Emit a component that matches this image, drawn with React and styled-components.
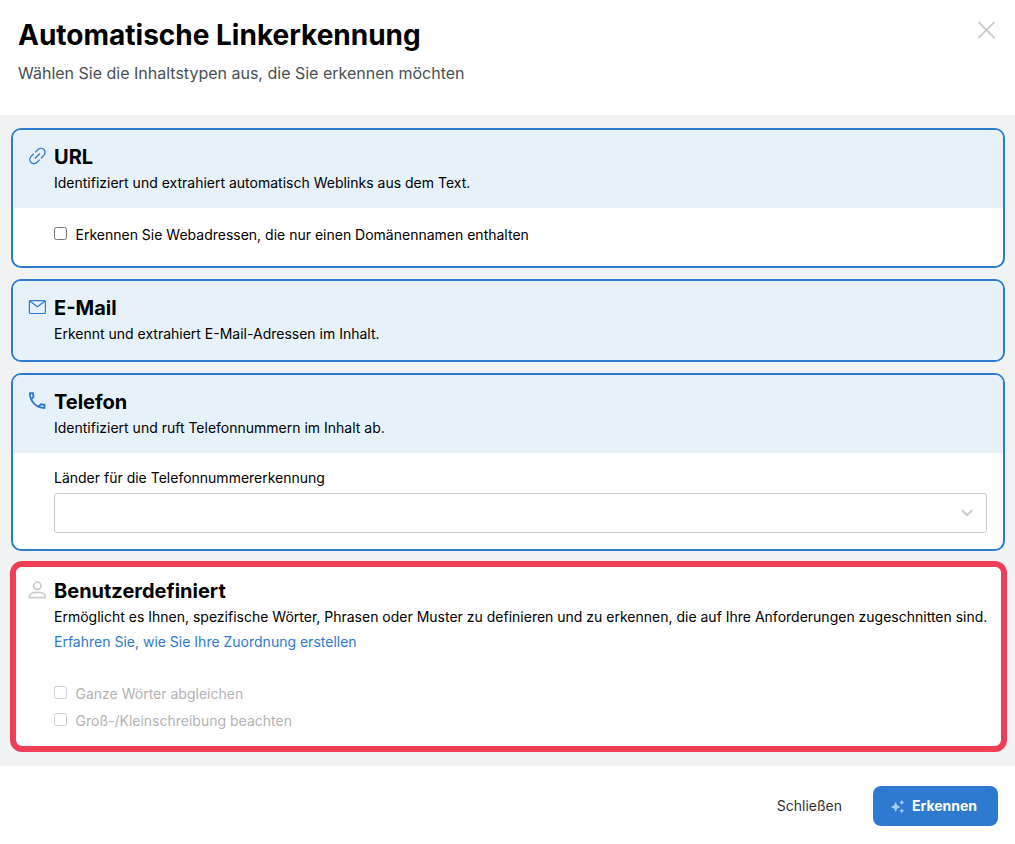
import React from 'react';
import styled, { createGlobalStyle, css } from 'styled-components';

const BLUE = '#2e7ad1';

const GlobalStyle = createGlobalStyle`
  * { box-sizing: border-box; }
  html, body { margin: 0; background: #fff; }
  body { font-family: Inter, "Liberation Sans", sans-serif; font-size: 14px; color: #000; overflow: hidden; }
`;

const Dialog = styled.main`
  display: flex;
  flex-direction: column;
  width: 1015px;
  height: 844px;
  background: #fff;
`;

const Header = styled.header`
  display: flex;
  justify-content: space-between;
  height: 115px;
  padding: 17px 20px 0 18px;
`;

const Title = styled.h1`
  margin: 0;
  font-size: 28px;
  line-height: 36px;
  font-weight: 700;
`;

const Subtitle = styled.p`
  margin: 10px 0 0;
  font-size: 16px;
  line-height: 20px;
  color: #495054;
`;

const CloseButton = styled.button`
  width: 18px;
  height: 18px;
  margin-top: 4px;
  padding: 0;
  border: 0;
  background: none;
  color: #ccc;
  svg { display: block; }
`;

const Body = styled.section`
  display: flex;
  flex-direction: column;
  height: 651px;
  padding: 13px 10px 0 11px;
  background: #f0f2f4;
`;

const Card = styled.article`
  flex: none;
  width: 994px;
  height: ${(p) => p.$height}px;
  margin-bottom: 11px;
  border: 2px solid ${BLUE};
  border-radius: 10px;
  background: #fff;
  overflow: hidden;
  ${(p) =>
    p.$highlighted &&
    css`
      width: 997px;
      margin: -1px 0 0 -1px;
      border: 6px solid #f03e56;
      border-radius: 12px;
    `}
`;

const CardHead = styled.div`
  display: flex;
  height: ${(p) => (p.$plain ? 'auto' : '78px')};
  padding: ${(p) => (p.$plain ? '11px 0 0 12px' : '14px 0 0 15px')};
  background: ${(p) => (p.$plain ? '#fff' : '#e6f1fa')};
  ${(p) => p.$fill && 'height: 100%;'}
`;

const IconBox = styled.span`
  flex: none;
  width: 26px;
  padding-top: 3px;
  color: ${(p) => (p.$muted ? '#ccc' : BLUE)};
  svg { display: block; }
`;

const CardTitle = styled.h2`
  margin: 0;
  font-size: 20px;
  line-height: 26px;
  font-weight: 650;
`;

const Text = styled.p`
  margin: 3px 0 0;
  line-height: 20px;
  white-space: nowrap;
`;

const LearnLink = styled.a`
  display: block;
  margin-top: 5px;
  line-height: 20px;
  color: ${BLUE};
`;

const CardBody = styled.div`
  padding: ${(p) => p.$top}px 16px 0 41px;
  ${(p) => p.$plain && 'padding-left: 38px;'}
`;

const CheckRow = styled.label`
  display: flex;
  align-items: center;
  height: 27px;
  color: ${(p) => (p.$disabled ? '#b3b3b3' : '#000')};
`;

const Checkbox = styled.input`
  appearance: none;
  flex: none;
  width: 13px;
  height: 13px;
  margin: -3px 8.5px 0 0;
  border: 1px solid #767676;
  border-radius: 2.5px;
  background: #fff;
  &:disabled { border-color: #cfcfcf; }
`;

const FieldLabel = styled.div`
  line-height: 20px;
`;

const Select = styled.div`
  display: flex;
  align-items: center;
  justify-content: flex-end;
  width: 933px;
  height: 40px;
  margin-top: 5px;
  padding-right: 13px;
  border: 1px solid #ccc;
  border-radius: 3px;
`;

const Footer = styled.footer`
  display: flex;
  justify-content: flex-end;
  align-items: center;
  height: 78px;
  padding: 2px 17px 0 0;
`;

const TextButton = styled.button`
  margin-right: 31px;
  padding: 0 0 2px;
  border: 0;
  background: none;
  font: inherit;
  color: #333;
`;

const PrimaryButton = styled.button`
  display: flex;
  align-items: center;
  width: 125px;
  height: 40px;
  padding: 0 0 0 17px;
  gap: 7px;
  border: 0;
  border-radius: 8px;
  background: ${BLUE};
  color: #fff;
  font: inherit;
  font-weight: 700;
`;

const ButtonLabel = styled.span`
  padding-bottom: 2px;
`;

const LinkIcon = () => (
  <svg width="18" height="18" viewBox="0 0 18 18" fill="none" stroke="currentColor" strokeWidth="1.3">
    <g transform="translate(9.4 9) rotate(-45)">
      <path d="M-1-4.1H-5A4.1 4.1 0 0 0-5 4.1H-1M1-4.1H5A4.1 4.1 0 0 1 5 4.1H1M-3.6 0H3.6" />
    </g>
  </svg>
);

const MailIcon = () => (
  <svg width="18" height="18" viewBox="0 0 18 18" fill="none" stroke="currentColor" strokeWidth="1.2">
    <rect x="1.4" y="2.6" width="16" height="12.9" rx="1" />
    <path d="M1.7 3l7.7 5.8L17.1 3" />
  </svg>
);

const PhoneIcon = () => (
  <svg width="18" height="18" viewBox="2 2.6 19.6 19.6" fill="currentColor">
    <path d="M6.54 5c.06.89.21 1.76.45 2.59l-1.2 1.2c-.41-1.2-.67-2.47-.76-3.79h1.51m9.86 12.02c.85.24 1.72.39 2.6.45v1.49c-1.32-.09-2.59-.35-3.8-.75l1.2-1.19M7.5 3H4c-.55 0-1 .45-1 1 0 9.39 7.61 17 17 17 .55 0 1-.45 1-1v-3.49c0-.55-.45-1-1-1-1.24 0-2.45-.2-3.57-.57-.1-.04-.21-.05-.31-.05-.26 0-.51.1-.71.29l-2.2 2.2c-2.83-1.45-5.15-3.76-6.59-6.59l2.2-2.2c.28-.28.36-.67.25-1.02C8.7 6.45 8.5 5.25 8.5 4c0-.55-.45-1-1-1z" />
  </svg>
);

const PersonIcon = () => (
  <svg width="19" height="18" viewBox="0 0 19 18" fill="none" stroke="currentColor" strokeWidth="1.7">
    <circle cx="9.4" cy="4.8" r="3.6" />
    <path d="M1.4 16.7V15c0-2.4 4-3.7 8-3.7s8 1.3 8 3.7v1.7z" />
  </svg>
);

const SparkleIcon = () => (
  <svg width="15" height="15" viewBox="0 0 15 15" fill="#afcdf0">
    <path d="M5.7 3l1.5 3.3L10.5 8 7.2 9.6 5.7 13 4.1 9.6.8 8l3.3-1.7zM11.8.8l.8 1.8 1.8.8-1.8.8-.8 1.8-.8-1.8-1.8-.8 1.8-.8zM11.8 9.2l.8 1.8 1.8.8-1.8.8-.8 1.8-.8-1.8-1.8-.8 1.8-.8z" />
  </svg>
);

export default function App() {
  return (
    <>
      <GlobalStyle />
      <Dialog>
        <Header>
          <div>
            <Title>Automatische Linkerkennung</Title>
            <Subtitle>Wählen Sie die Inhaltstypen aus, die Sie erkennen möchten</Subtitle>
          </div>
          <CloseButton aria-label="Schließen">
            <svg width="18" height="18" viewBox="0 0 18 18" stroke="currentColor" strokeWidth="1.8">
              <path d="M1.5 1l16 16M17.5 1l-16 16" />
            </svg>
          </CloseButton>
        </Header>
        <Body>
          <Card $height={140}>
            <CardHead>
              <IconBox><LinkIcon /></IconBox>
              <div>
                <CardTitle>URL</CardTitle>
                <Text>Identifiziert und extrahiert automatisch Weblinks aus dem Text.</Text>
              </div>
            </CardHead>
            <CardBody $top={13}>
              <CheckRow>
                <Checkbox type="checkbox" />
                Erkennen Sie Webadressen, die nur einen Domänennamen enthalten
              </CheckRow>
            </CardBody>
          </Card>
          <Card $height={83}>
            <CardHead $fill>
              <IconBox><MailIcon /></IconBox>
              <div>
                <CardTitle>E-Mail</CardTitle>
                <Text>Erkennt und extrahiert E-Mail-Adressen im Inhalt.</Text>
              </div>
            </CardHead>
          </Card>
          <Card $height={178}>
            <CardHead>
              <IconBox><PhoneIcon /></IconBox>
              <div>
                <CardTitle>Telefon</CardTitle>
                <Text>Identifiziert und ruft Telefonnummern im Inhalt ab.</Text>
              </div>
            </CardHead>
            <CardBody $top={15}>
              <FieldLabel>Länder für die Telefonnummererkennung</FieldLabel>
              <Select role="combobox" aria-label="Länder">
                <svg width="12" height="8" viewBox="0 0 12 8" fill="none" stroke="#ccc" strokeWidth="2">
                  <path d="M1 1.2l5 5 5-5" />
                </svg>
              </Select>
            </CardBody>
          </Card>
          <Card $height={191} $highlighted>
            <CardHead $plain>
              <IconBox $muted><PersonIcon /></IconBox>
              <div>
                <CardTitle>Benutzerdefiniert</CardTitle>
                <Text>
                  Ermöglicht es Ihnen, spezifische Wörter, Phrasen oder Muster zu definieren und zu erkennen, die auf Ihre Anforderungen zugeschnitten sind.
                </Text>
                <LearnLink>Erfahren Sie, wie Sie Ihre Zuordnung erstellen</LearnLink>
              </div>
            </CardHead>
            <CardBody $top={28} $plain>
              <CheckRow $disabled>
                <Checkbox type="checkbox" disabled />
                Ganze Wörter abgleichen
              </CheckRow>
              <CheckRow $disabled>
                <Checkbox type="checkbox" disabled />
                Groß-/Kleinschreibung beachten
              </CheckRow>
            </CardBody>
          </Card>
        </Body>
        <Footer>
          <TextButton>Schließen</TextButton>
          <PrimaryButton>
            <SparkleIcon />
            <ButtonLabel>Erkennen</ButtonLabel>
          </PrimaryButton>
        </Footer>
      </Dialog>
    </>
  );
}
